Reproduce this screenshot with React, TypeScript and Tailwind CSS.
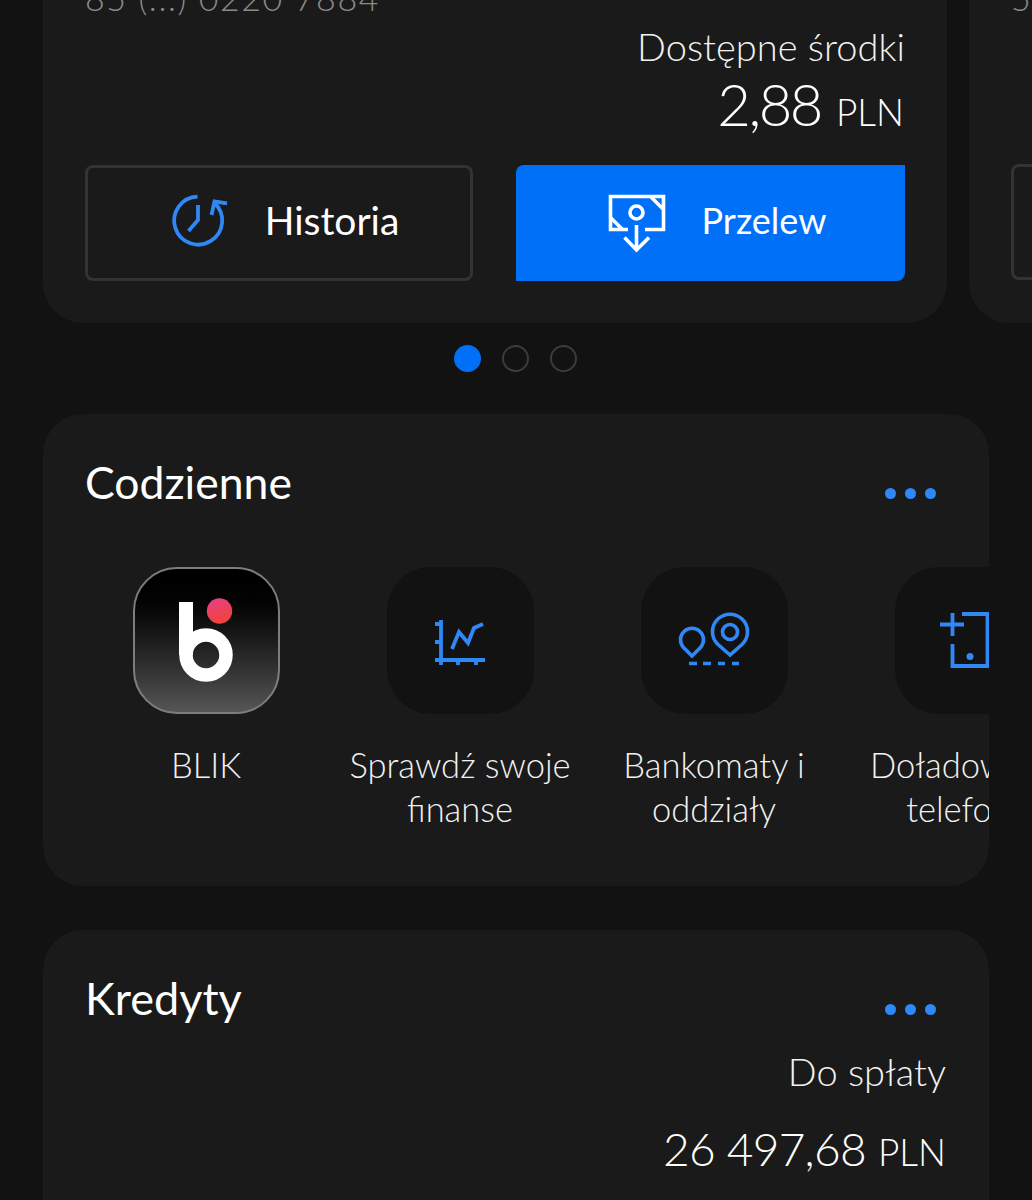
const FONT = "font-['Lato','Liberation_Sans',sans-serif]";

function Dots() {
  return (
    <div className="flex gap-[9px]">
      <span className="h-[11px] w-[11px] rounded-full bg-[#2f88f5]" />
      <span className="h-[11px] w-[11px] rounded-full bg-[#2f88f5]" />
      <span className="h-[11px] w-[11px] rounded-full bg-[#2f88f5]" />
    </div>
  );
}

function HistoryIcon() {
  return (
    <svg width="60" height="60" viewBox="170 195 60 60" fill="none" stroke="#2f88f5" strokeWidth="3.8">
      <path d="M198.5 198.6A24 24 0 1 0 215.5 205" />
      <path d="M228 205.4L215.5 203.5L212.5 217" />
      <path d="M199 207V222L189.5 233" />
    </svg>
  );
}

function TransferIcon() {
  return (
    <svg width="60" height="60" viewBox="606 193 60 60" fill="none" stroke="#fff" strokeWidth="3.6">
      <path d="M627 229.5H609.5V196.5H662.5V229.5H644" />
      <circle cx="635.5" cy="212.5" r="6.5" />
      <path d="M650 197L662 209" />
      <path d="M610 218L621 229" />
      <path d="M635.5 225V249M623.5 237.5L635.5 250L648 237.5" />
    </svg>
  );
}

function ChartIcon() {
  return (
    <svg className="h-full w-full" viewBox="387 567 147 147" fill="none" stroke="#2f88f5" strokeWidth="3.8">
      <path d="M441 620V665M435 624H441M435 642H441M435 660H485M458 660V665M476 660V665" />
      <path d="M452 649L459 632L468 643L474 628L483 624" />
    </svg>
  );
}

function PinsIcon() {
  return (
    <svg className="h-full w-full" viewBox="641 567 147 147" fill="none" stroke="#2f88f5" strokeWidth="3.6">
      <path d="M692 656L683.5 647.5A11.5 11.5 0 1 1 700.5 647.5Z" />
      <path d="M730 655L717.5 644A17.5 17.5 0 1 1 742.5 644Z" />
      <circle cx="730" cy="632" r="7.5" />
      <path d="M689 663.5H697M703 663.5H711M718 663.5H725M732 663.5H739" />
    </svg>
  );
}

function PhoneIcon() {
  return (
    <svg className="h-full w-full" viewBox="895 567 147 147" fill="none" stroke="#2f88f5" strokeWidth="3.8">
      <path d="M962 614H987.5V666H952.5V644" />
      <path d="M940 624.5H964M952.5 613V636" />
      <circle cx="970" cy="656.5" r="3.5" fill="#2f88f5" stroke="none" />
    </svg>
  );
}

function BlikLogo() {
  return (
    <svg width="143" height="143" viewBox="135 569 143 143" fill="none">
      <defs>
        <linearGradient id="blikDot" x1="0" y1="0" x2="0.3" y2="1">
          <stop offset="0" stopColor="#e5418a" />
          <stop offset="1" stopColor="#f2413a" />
        </linearGradient>
      </defs>
      <circle cx="206" cy="655" r="20" stroke="#fff" strokeWidth="13.5" />
      <rect x="179" y="602" width="14" height="53" fill="#fff" />
      <circle cx="219.5" cy="611" r="12.7" fill="url(#blikDot)" />
    </svg>
  );
}

function Tile({ label, icon, blik }: { label: string[]; icon?: React.ReactNode; blik?: boolean }) {
  return (
    <div className="flex w-[254px] shrink-0 flex-col items-center">
      {blik ? (
        <div className="flex h-[147px] w-[147px] items-center justify-center rounded-[44px] border-2 border-[#7d7d7d] bg-gradient-to-b from-[#000000] to-[#565656]">
          <BlikLogo />
        </div>
      ) : (
        <div className="h-[147px] w-[147px] rounded-[44px] bg-[#121212]">{icon}</div>
      )}
      <div className="mt-[29px] whitespace-nowrap text-center text-[34.5px] font-light leading-[44px] text-[#f2f2f2]">
        {label.map((l) => (
          <div key={l}>{l}</div>
        ))}
      </div>
    </div>
  );
}

function CarouselDot({ active }: { active?: boolean }) {
  return active ? (
    <span className="h-[27px] w-[27px] rounded-full bg-[#0070f8]" />
  ) : (
    <span className="h-[27px] w-[27px] rounded-full border-2 border-[#3c3c3c]" />
  );
}

export default function App() {
  return (
    <div className={`h-[1200px] w-[1032px] overflow-hidden bg-[#121212] ${FONT}`}>
      <div className="-mt-[40px] flex gap-[22px] overflow-hidden pl-[43px]">
        <div className="h-[363px] w-[904px] shrink-0 rounded-b-[40px] bg-[#1a1a1a] px-[42px] pt-[16px]">
          <div className="text-[34px] font-light leading-[44px] tracking-[1.6px] text-[#8a8a8a]">85 (...) 0220 7884</div>
          <div className="mt-[4px] text-right text-[38px] font-light leading-[44px] text-[#f2f2f2]">Dostępne środki</div>
          <div className="mt-[6px] pr-[1px] text-right leading-[60px] text-white">
            <span className="text-[58px] font-light tracking-[-2.5px]">2,88</span>
            <span className="ml-[15px] text-[37px] font-light">PLN</span>
          </div>
          <div className="mt-[15px] flex gap-[43px]">
            <div className="flex h-[116px] w-[388px] items-center justify-center gap-[36px] rounded-[8px] border-[3px] border-[#333333] pl-[10px]">
              <HistoryIcon />
              <span className="mb-[6px] text-[39px] font-normal leading-none text-white">Historia</span>
            </div>
            <div className="flex h-[116px] w-[389px] items-center justify-center gap-[35px] rounded-tl-[8px] rounded-br-[8px] bg-[#0070f8] pl-[12px]">
              <TransferIcon />
              <span className="mb-[6px] text-[36px] font-normal leading-none text-white">Przelew</span>
            </div>
          </div>
        </div>
        <div className="h-[363px] w-[904px] shrink-0 rounded-b-[40px] bg-[#1a1a1a] px-[42px] pt-[16px]">
          <div className="text-[34px] font-light leading-[44px] text-[#8a8a8a]">5</div>
          <div className="mt-[144px] h-[116px] w-[388px] rounded-[8px] border-[3px] border-[#333333]" />
        </div>
      </div>

      <div className="mt-[22px] flex justify-center gap-[21px] pr-[1px]">
        <CarouselDot active />
        <CarouselDot />
        <CarouselDot />
      </div>

      <div className="ml-[43px] mt-[42px] h-[472px] w-[946px] overflow-hidden rounded-[40px] bg-[#1a1a1a]">
        <div className="flex items-center justify-between pl-[42px] pr-[53px] pt-[41px]">
          <span className="text-[44.5px] font-normal leading-[54px] text-white">Codzienne</span>
          <span className="mt-[22px]"><Dots /></span>
        </div>
        <div className="mt-[58px] flex pl-[36px]">
          <Tile blik label={["BLIK"]} />
          <Tile icon={<ChartIcon />} label={["Sprawdź swoje", "finanse"]} />
          <Tile icon={<PinsIcon />} label={["Bankomaty i", "oddziały"]} />
          <Tile icon={<PhoneIcon />} label={["Doładowania", "telefonu"]} />
        </div>
      </div>

      <div className="ml-[43px] mt-[44px] h-[400px] w-[946px] rounded-[40px] bg-[#1a1a1a] pl-[42px] pr-[43px]">
        <div className="flex items-center justify-between pr-[10px] pt-[41px]">
          <span className="text-[45px] font-normal leading-[54px] text-white">Kredyty</span>
          <span className="mt-[22px]"><Dots /></span>
        </div>
        <div className="mt-[24px] text-right text-[38px] font-light leading-[44px] text-[#f2f2f2]">Do spłaty</div>
        <div className="mt-[26px] text-right leading-[60px] text-white">
          <span className="text-[46px] font-light tracking-[-0.7px]">26 497,68</span>
          <span className="ml-[12px] text-[37px] font-light">PLN</span>
        </div>
      </div>
    </div>
  );
}
